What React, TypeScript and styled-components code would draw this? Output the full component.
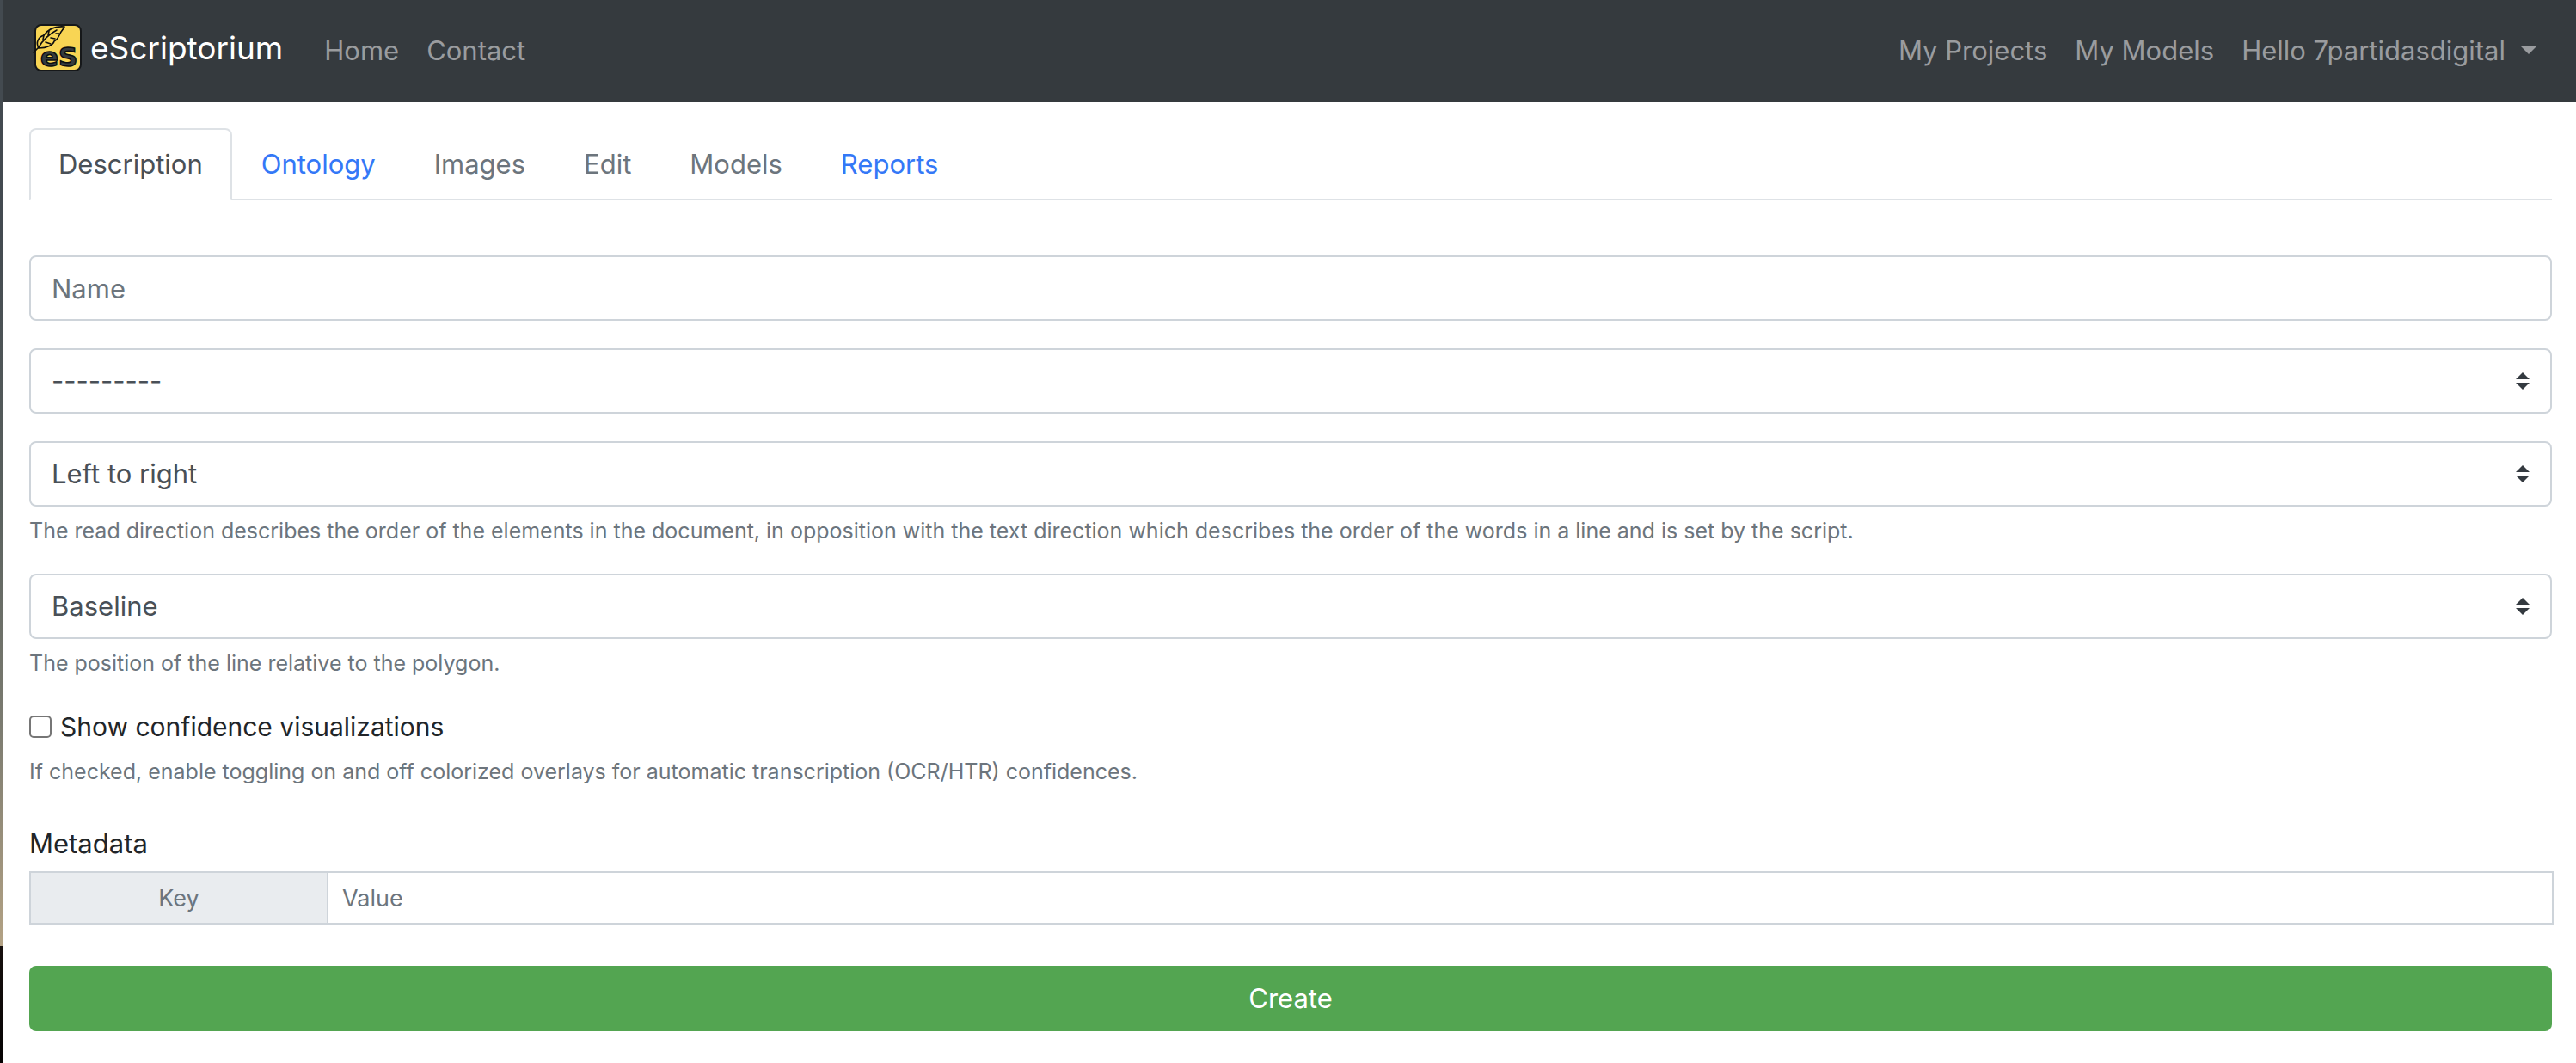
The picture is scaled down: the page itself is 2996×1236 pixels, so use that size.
import React, { useState } from "react";
import styled, { createGlobalStyle } from "styled-components";

const GlobalStyle = createGlobalStyle`
  *, *::before, *::after { box-sizing: border-box; }
  body {
    margin: 0;
    background: #fff;
    color: #212529;
    font-family: Inter, Roboto, "Liberation Sans", sans-serif;
    font-size: 31px;
    line-height: 48px;
  }
  input, select, button { font: inherit; margin: 0; }
`;

const Shell = styled.div`
  display: flex;
  min-height: 100vh;
`;

const DesktopEdge = styled.div`
  flex: 0 0 4px;
  border-right: 1px solid #33383b;
  background: linear-gradient(
    to bottom,
    #434a50 0%, #434a50 22%, #5b625f 48%, #7b7b70 68%,
    #b3a284 89%, #17100e 89%, #050303 100%
  );
`;

const Page = styled.div`
  flex: 1;
  min-width: 0;
`;

const Navbar = styled.header`
  display: flex;
  align-items: center;
  height: 119px;
  padding: 0 28px 0 32px;
  background: #353a3e;
`;

const Brand = styled.a`
  display: flex;
  align-items: center;
  gap: 8px;
  margin-right: 32px;
  padding-bottom: 8px;
  color: #fff;
  font-size: 37px;
  text-decoration: none;
`;

const Logo = styled.svg`
  display: block;
  width: 61px;
  height: 60px;
`;

const NavLinks = styled.nav<{ $end?: boolean }>`
  display: flex;
  margin-left: ${(p) => (p.$end ? "auto" : "0")};
  padding-bottom: 2px;
`;

const NavLink = styled.a`
  display: flex;
  align-items: center;
  padding: 0 16px;
  color: #9a9c9f;
  text-decoration: none;
`;

const NavMenu = styled.button`
  display: flex;
  align-items: center;
  gap: 18px;
  padding: 0 18px 0 16px;
  border: 0;
  background: none;
  color: #9a9c9f;
`;

const Caret = styled.span`
  border: 9px solid transparent;
  border-top-color: currentColor;
  border-bottom: 0;
`;

const Main = styled.main`
  padding: 30px 28px 36px 30px;
`;

const Tabs = styled.nav`
  display: flex;
  border-bottom: 2px solid #dee2e6;
`;

const tabColors = { active: "#495057", link: "#3478f7", disabled: "#6c757d" };

const Tab = styled.a<{ $kind: keyof typeof tabColors }>`
  margin-bottom: -2px;
  padding: 16px 32px;
  border: 2px solid;
  border-color: ${(p) => (p.$kind === "active" ? "#dee2e6 #dee2e6 #fff" : "transparent")};
  border-radius: 8px 8px 0 0;
  color: ${(p) => tabColors[p.$kind]};
  text-decoration: none;
`;

const Form = styled.form`
  display: flex;
  flex-direction: column;
  gap: 32px;
  margin-top: 64px;
`;

const Group = styled.div`
  display: flex;
  flex-direction: column;
  gap: 10px;
`;

const TextInput = styled.input`
  width: 100%;
  height: 76px;
  padding: 12px 24px;
  border: 2px solid #ced4da;
  border-radius: 8px;
  color: #495057;
  &::placeholder { color: #6c757d; opacity: 1; }
`;

const SelectBox = styled.div`
  display: grid;
  align-items: center;
  & > * { grid-area: 1 / 1; }
`;

const Select = styled.select`
  appearance: none;
  width: 100%;
  height: 76px;
  padding: 12px 60px 12px 24px;
  border: 2px solid #ced4da;
  border-radius: 8px;
  background: #fff;
  color: #495057;
`;

const SortArrows = styled.svg`
  justify-self: end;
  width: 16px;
  height: 20px;
  margin-right: 26px;
  pointer-events: none;
`;

const Help = styled.small`
  color: #6c757d;
  font-size: 25px;
  line-height: 36px;
`;

const CheckRow = styled.label`
  display: flex;
  align-items: center;
  gap: 10px;
  font-size: 30px;
`;

const Checkbox = styled.input`
  appearance: none;
  width: 26px;
  height: 26px;
  border: 2px solid #767676;
  border-radius: 5px;
  background: #fff;
  &:checked { background: #3478f7; }
`;

const Fieldset = styled.fieldset`
  min-width: 0;
  margin: 10px -2px 16px 0;
  padding: 0;
  border: 0;
`;

const Legend = styled.legend`
  margin-bottom: 8px;
  padding: 0;
`;

const MetaRow = styled.div`
  display: flex;
`;

const MetaInput = styled.input<{ $key?: boolean }>`
  flex: ${(p) => (p.$key ? "0 0 348px" : "1 1 0")};
  min-width: 0;
  height: 62px;
  margin-left: ${(p) => (p.$key ? "0" : "-2px")};
  padding: 8px 16px;
  border: 2px solid #ced4da;
  border-radius: 0;
  background: ${(p) => (p.$key ? "#e9ecef" : "#fff")};
  color: #495057;
  font-size: 27px;
  text-align: ${(p) => (p.$key ? "center" : "left")};
  &::placeholder { color: #6c757d; opacity: 1; }
`;

const Submit = styled.button`
  height: 76px;
  border: 0;
  border-radius: 8px;
  background: #53a551;
  color: #fff;
`;

function EsLogo() {
  return (
    <Logo viewBox="0 0 61 60" aria-hidden="true">
      <rect x="5" y="3" width="53" height="53" rx="7" fill="#f8d554" stroke="#16181a" strokeWidth="2" />
      <text
        x="11" y="51" fontFamily="DejaVu Sans, sans-serif" fontWeight="700" fontSize="31"
        fill="#353a3e" stroke="#0d0e0f" strokeWidth="1.5"
      >
        eS
      </text>
      <g fill="none" stroke="#0d0e0f" strokeWidth="1.6" strokeLinecap="round" strokeLinejoin="round">
        <path d="M3 35 L9 29 C13 22 19 15 30 9" />
        <path d="M9 30 C5 23 9 17 15 15 C20 8 28 4 39 5 C38 8 35 10 34 13 C32 17 31 20 27 22 C26 26 19 30 9 30" />
        <path d="M15 15 L14 20 M21 10 L20 15 M29 13 L33 13 M23 18 L28 19 M17 23 L23 25" />
      </g>
    </Logo>
  );
}

function SelectField(props: { label: string; options: string[]; help?: string }) {
  return (
    <Group>
      <SelectBox>
        <Select aria-label={props.label}>
          {props.options.map((o) => (
            <option key={o}>{o}</option>
          ))}
        </Select>
        <SortArrows viewBox="0 0 16 20" aria-hidden="true">
          <path d="M0 8 L8 0 L16 8 Z M0 12 L8 20 L16 12 Z" fill="#343a40" />
        </SortArrows>
      </SelectBox>
      {props.help && <Help>{props.help}</Help>}
    </Group>
  );
}

const tabs: { name: string; kind: keyof typeof tabColors }[] = [
  { name: "Description", kind: "active" },
  { name: "Ontology", kind: "link" },
  { name: "Images", kind: "disabled" },
  { name: "Edit", kind: "disabled" },
  { name: "Models", kind: "disabled" },
  { name: "Reports", kind: "link" },
];

export default function App() {
  const [confidence, setConfidence] = useState(false);
  return (
    <>
      <GlobalStyle />
      <Shell>
        <DesktopEdge />
        <Page>
          <Navbar>
            <Brand href="#">
              <EsLogo />
              eScriptorium
            </Brand>
            <NavLinks>
              <NavLink href="#">Home</NavLink>
              <NavLink href="#">Contact</NavLink>
            </NavLinks>
            <NavLinks $end>
              <NavLink href="#">My Projects</NavLink>
              <NavLink href="#">My Models</NavLink>
              <NavMenu type="button">
                Hello 7partidasdigital
                <Caret />
              </NavMenu>
            </NavLinks>
          </Navbar>
          <Main>
            <Tabs>
              {tabs.map((t) => (
                <Tab key={t.name} href="#" $kind={t.kind}>
                  {t.name}
                </Tab>
              ))}
            </Tabs>
            <Form onSubmit={(e) => e.preventDefault()}>
              <TextInput type="text" placeholder="Name" aria-label="Name" />
              <SelectField label="Main script" options={["---------"]} />
              <SelectField
                label="Read direction"
                options={["Left to right", "Right to left"]}
                help="The read direction describes the order of the elements in the document, in opposition with the text direction which describes the order of the words in a line and is set by the script."
              />
              <SelectField
                label="Line offset"
                options={["Baseline", "Topline", "Centered"]}
                help="The position of the line relative to the polygon."
              />
              <Group>
                <CheckRow>
                  <Checkbox
                    type="checkbox"
                    checked={confidence}
                    onChange={(e) => setConfidence(e.target.checked)}
                  />
                  Show confidence visualizations
                </CheckRow>
                <Help>
                  If checked, enable toggling on and off colorized overlays for automatic transcription (OCR/HTR) confidences.
                </Help>
              </Group>
              <Fieldset>
                <Legend>Metadata</Legend>
                <MetaRow>
                  <MetaInput $key type="text" placeholder="Key" aria-label="Key" />
                  <MetaInput type="text" placeholder="Value" aria-label="Value" />
                </MetaRow>
              </Fieldset>
              <Submit type="submit">Create</Submit>
            </Form>
          </Main>
        </Page>
      </Shell>
    </>
  );
}
